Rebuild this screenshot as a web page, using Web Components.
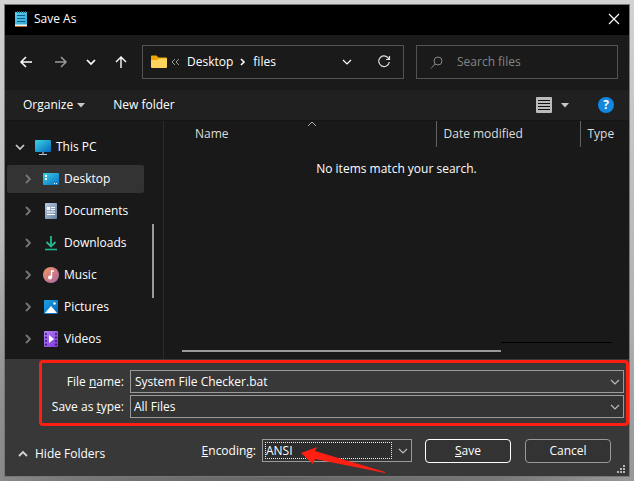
<!DOCTYPE html>
<html lang="en">
<head>
<meta charset="utf-8">
<title>Save As</title>
<style>
html,body{height:100%}
body{margin:0;font:12px/16px "Open Sans","Noto Sans",sans-serif;color:#fff;
background:radial-gradient(ellipse 60% 75% at 45% 100%,#666 0,#777 55%,transparent 100%),linear-gradient(#d2d2d2,#a0a0a0)}
</style>
</head>
<body>
<save-dialog></save-dialog>
<script>
const base = `*{box-sizing:border-box}button,input,select{font:inherit;color:inherit;margin:0}
button{background:none;border:0;padding:0;display:flex;align-items:center}svg{display:block;flex:none}`;
function define(name, css, html) {
  customElements.define(name, class extends HTMLElement {
    constructor() {
      super();
      this.attachShadow({mode: 'open'}).innerHTML = `<style>${base}${css}</style>${typeof html === 'function' ? html(this) : html}`;
    }
  });
}
const svg = (w, h, body) => `<svg width="${w}" height="${h}" viewBox="0 0 ${w} ${h}" fill="none" aria-hidden="true">${body}</svg>`;
const icons = {
  notepad: svg(12, 16, '<defs><linearGradient id="a" x2="1" y2="1"><stop stop-color="#5fd0ee"/><stop offset="1" stop-color="#2ba4d4"/></linearGradient></defs><path d="M0 1h12v14H0z" fill="url(#a)"/><path d="M0 13.5h12V15H0z" fill="#e8f2f5"/><path d="M0 15h12v1H0z" fill="#b2622a"/><path d="M2 4.5h8M2 7.5h8M2 10.500h8" stroke="#0c5f8a"/><path d="M2.500 0v2M4.500 0v2M6.500 0v2M8.500 0v2M10.500 0v2" stroke="#17668a"/>'),
  close: svg(12, 12, '<path d="M1 1l10 10M11 1L1 11" stroke="#fff" stroke-width="1.200"/>'),
  back: svg(14, 14, '<path d="M13 7H2M7 2L2 7l5 5" stroke="#fff" stroke-width="1.500"/>'),
  forward: svg(14, 14, '<path d="M1 7h11M7 2l5 5-5 5" stroke="#999" stroke-width="1.500"/>'),
  up: svg(14, 14, '<path d="M7 13V2M2 7l5-5 5 5" stroke="#fff" stroke-width="1.400"/>'),
  down: svg(10, 8, '<path d="M1 2l4 4 4-4" stroke="currentColor" stroke-width="1.700"/>'),
  thinDown: svg(10, 8, '<path d="M1 2l4 4 4-4" stroke="currentColor" stroke-width="1.200"/>'),
  right: svg(6, 10, '<path d="M1 1l4 4-4 4" stroke="currentColor" stroke-width="1.800"/>'),
  crumb: svg(6, 10, '<path d="M1 2l3 3-3 3" stroke="#fff" stroke-width="1.600"/>'),
  hide: svg(10, 8, '<path d="M1 6l4-4 4 4" stroke="#d5d5d5" stroke-width="1.800"/>'),
  folder: svg(16, 14, '<path d="M0 1.500Q0 .500 1 .500h4.500l2 2H15q1 0 1 1V7H0z" fill="#f0a500"/><path d="M0 5h6l2-1.500h7q1 0 1 1V12q0 1-1 1H1q-1 0-1-1z" fill="#ffd45a"/>'),
  chev2: svg(9, 8, '<path d="M4 1L1 4l3 3M8 1L5 4l3 3" stroke="#999"/>'),
  refresh: svg(14, 14, '<path d="M12 4.300A5.300 5.300 0 1 0 12.300 7M12.500 1v3.500H9" stroke="#ddd" stroke-width="1.200"/>'),
  search: svg(13, 13, '<circle cx="8" cy="5" r="4" stroke="#858585"/><path d="M5 8l-4 4.500" stroke="#858585"/>'),
  tri: svg(8, 5, '<path d="M0 0h8L4 4.500z" fill="#c8c8c8"/>'),
  list: svg(16, 16, '<rect width="16" height="16" rx="1" fill="#bbb"/><path d="M2 3.500h12M2 6.500h12M2 9.500h12M2 12.500h12" stroke="#111"/>'),
  pc: svg(16, 16, '<defs><linearGradient id="a" x2="1" y2="1"><stop stop-color="#39d5e5"/><stop offset="1" stop-color="#0867bd"/></linearGradient></defs><rect y="1" width="16" height="12" rx="1" fill="url(#a)"/><path d="M7 13h2v2H7z" fill="#6e7e90"/><path d="M4 15.500h8" stroke="#b7c6d6"/>'),
  desktop: svg(16, 16, '<defs><linearGradient id="a" x2="1" y2="1"><stop stop-color="#36d0e2"/><stop offset="1" stop-color="#0b70c4"/></linearGradient></defs><rect y="2" width="16" height="12" rx="1" fill="url(#a)"/><path d="M2 4h2v2H2zM2 7h2v2H2z" fill="#fff"/><path d="M11 12.500h1M13 12.500h1" stroke="#fff"/>'),
  docs: svg(16, 16, '<defs><linearGradient id="a" x2="1" y2="1"><stop stop-color="#b7cbe0"/><stop offset="1" stop-color="#657f9e"/></linearGradient></defs><rect x="2" width="12" height="16" rx="1" fill="url(#a)"/><path d="M4 4h3v3H4zM8 4h4v1H8zM8 6h4v1H8zM4 8.500h8v1H4zM4 11h8v1H4z" fill="#fff"/>'),
  downloads: svg(16, 16, '<path d="M8 1v10M3.500 7L8 11.500 12.500 7" stroke="#27b98f" stroke-width="1.800"/><path d="M2 14.500h12" stroke="#20b38f" stroke-width="1.600"/>'),
  music: svg(16, 16, '<defs><linearGradient id="a" x2="1" y2="1"><stop stop-color="#f39a62"/><stop offset=".6" stop-color="#c8788a"/><stop offset="1" stop-color="#a26ba8"/></linearGradient></defs><circle cx="8" cy="8" r="8" fill="url(#a)"/><circle cx="7" cy="10.500" r="2" fill="#fff"/><path d="M8.500 10.500V4h2.500" stroke="#fff" stroke-width="1.400"/>'),
  pictures: svg(16, 16, '<defs><linearGradient id="a" x2="1" y2="1"><stop stop-color="#1ba3e6"/><stop offset="1" stop-color="#0b62b8"/></linearGradient></defs><rect x="1" y="1" width="14" height="14" rx="1" fill="url(#a)"/><path d="M2 14l6-7 6 7z" fill="#fff"/><circle cx="11.500" cy="4.500" r="1.200" fill="#fff"/>'),
  videos: svg(16, 16, '<defs><linearGradient id="a" x2="1" y2="1"><stop stop-color="#b382f5"/><stop offset="1" stop-color="#7b35d8"/></linearGradient></defs><rect x="1" width="14" height="16" rx="1" fill="url(#a)"/><path d="M2 3h2M2 6.500h2M2 10h2M2 13.500h2M12 3h2M12 6.500h2M12 10h2M12 13.500h2" stroke="#3b1775" stroke-width="1.500"/><path d="M6 4l5 4-5 4z" fill="#fff"/>'),
  help: svg(16, 16, '<circle cx="8" cy="8" r="8" fill="#1287dd"/>')
};

define('title-bar', `:host{display:flex;align-items:center;height:30px;flex:none;padding:0 9px 2px 10px;background:#000}
h1{font:inherit;margin:0 auto 0 7px}`,
  `${icons.notepad}<h1><slot></slot></h1><button aria-label="Close">${icons.close}</button>`);

define('nav-bar', `:host{display:flex;align-items:center;height:55px;flex:none;padding:0 11px 1px 14px;background:#1a1a1a;gap:12px}
nav{display:flex;align-items:center;width:111px;flex:none;gap:21px}nav button:nth-child(3){margin:0 -3px}
.address,.search{display:flex;align-items:center;height:34px;border:1px solid #535353}
.address{flex:1 1 261px;min-width:0;padding:0 12px 0 8px;gap:4px}.address a{color:inherit;text-decoration:none;margin:0 3px}
.address .more{margin-left:auto;margin-right:21px}
.search{flex:0 1 202px;min-width:0;padding:0 13px;gap:14px}input{flex:1;min-width:0;width:0;background:none;border:0;padding:0;outline:0}input::placeholder{color:#858585;opacity:1}`,
  `<nav aria-label="History"><button aria-label="Back">${icons.back}</button><button aria-label="Forward">${icons.forward}</button><button aria-label="Recent">${icons.down}</button><button aria-label="Up">${icons.up}</button></nav>
<div class="address">${icons.folder}${icons.chev2}<a href="#desktop">Desktop</a>${icons.crumb}<a href="#files">files</a><button class="more" aria-label="Previous locations">${icons.thinDown}</button><button aria-label="Refresh">${icons.refresh}</button></div>
<div class="search">${icons.search}<input type="search" aria-label="Search files" placeholder="Search files"></div>`);

define('tool-bar', `:host{display:flex;align-items:center;height:30px;flex:none;padding:0 15px 0 18px;background:#202020}
button{gap:4px}.new{margin:0 auto 0 28px}.view{gap:9px;margin-right:29px}
.help{position:relative}.help span{position:absolute;inset:0;text-align:center;font-weight:700}`,
  `<button>Organize ${icons.tri}</button><button class="new">New folder</button><button class="view" aria-label="Change your view">${icons.list}${icons.tri}</button><button class="help" aria-label="Help">${icons.help}<span>?</span></button>`);

define('tree-item', `:host{display:flex;align-items:center;height:28px;margin-right:19px;padding-left:18px;gap:12px;color:#fff}
:host([open]){padding-left:8px;gap:10px}:host([selected]){background:#333;border-radius:2px}
.t{color:#777}:host([open]) .t{color:#ccc}.n{display:flex;align-items:center;gap:5px}`,
  el => `<button class="t" aria-label="Expand">${el.hasAttribute('open') ? icons.down : icons.right}</button><span class="n">${icons[el.getAttribute('icon')]}<slot></slot></span>`);

define('folder-tree', `:host{display:grid;align-content:start;gap:4px;width:159px;flex:none;padding:12px 0 0 2px;border-right:1px solid #2b2b2b;background:#191919;position:relative}
i{position:absolute;right:9px;top:103px;width:2px;height:74px;background:#9a9a9a}`, `<slot></slot><i></i>`);

define('file-list', `:host{display:flex;flex-direction:column;flex:1;min-width:0;background:#191919}
table{width:100%;border-collapse:collapse;table-layout:fixed}
th{position:relative;font-weight:400;text-align:left;color:#dedede;height:26px;padding:0 0 0 7px;border-left:1px solid #636363}
th:first-child{border:0;padding-left:31px}th svg{position:absolute;left:143px;top:0}
td{text-align:center;padding:14px 0 0}
.bars{margin-top:auto;padding:0 17px 7px 18px}.edge{height:1px;background:#000;width:111px;margin-left:auto}.thumb{width:319px;max-width:75%;height:2px;background:#999;margin-top:7px}`,
  `<table><colgroup><col><col style="width:144px"><col style="width:49px"></colgroup><thead><tr><th>${svg(10, 6, '<path d="M1 5l4-4 4 4" stroke="#aaa"/>')}Name</th><th>Date modified</th><th>Type</th></tr></thead><tbody><tr><td colspan="3">No items match your search.</td></tr></tbody></table><div class="bars"><div class="edge"></div><div class="thumb"></div></div>`);

define('name-fields', `:host{display:grid;grid-template-columns:82px 1fr;gap:2px 6px;align-items:center;border:3px solid #ff1e12;border-radius:4px;margin:1px 0 0 34px;padding:7px 2px 5px 0}
label{text-align:right}.field{position:relative;display:flex;height:23px;border:1px solid #9b9b9b;background:#333}
.first{background:#383838}input,select{flex:1;min-width:0;width:0;border:0;outline:0;background:none;appearance:none;padding:0 28px 0 4px}
select{padding-left:3px}
.field>svg,.field>button{position:absolute;right:3px;top:7px;color:#bbb;pointer-events:none}`,
  `<label for="n">File <u>n</u>ame:</label><div class="field first"><input id="n" value="System File Checker.bat"><button aria-label="Recent names">${icons.thinDown}</button></div>
<label for="t">Save as <u>t</u>ype:</label><div class="field"><select id="t"><option>All Files</option></select>${icons.thinDown}</div>`);

define('action-bar', `:host{display:flex;align-items:center;flex:1;position:relative;padding:0 18px 1px 13px}
.hide{gap:7px;margin:6px auto 0 0}
label{margin-right:6px}.sel{position:relative;width:150px;height:23px;border:1px solid #9b9b9b;background:#333;padding:2px 19px 2px 2px;margin-right:13px;display:flex}
.sel>svg{position:absolute;right:3px;top:7px;color:#bbb}select{width:100%;height:17px;line-height:15px;border:1px dotted #eee;appearance:none;outline:0;background:#2d2d2d;padding:0}
.b{width:86px;height:24px;justify-content:center;background:#333;border:1px solid #999;border-radius:4px}.b.main{border-color:#fff;margin-right:14px}
.arrow{position:absolute;left:295px;top:19px;pointer-events:none}.grip{position:absolute;right:3px;bottom:2px}`,
  `<button class="hide">${icons.hide}Hide Folders</button><label for="e"><u>E</u>ncoding:</label><div class="sel"><select id="e"><option>ANSI</option></select>${icons.thinDown}</div><button class="b main"><span><u>S</u>ave</span></button><button class="b">Cancel</button>
<div class="arrow">${svg(86, 30, '<path d="M1 8L17 2l-2 4L85 27v1L15 14l-2 5z" fill="#ff1e12"/>')}</div>
<div class="grip">${svg(9, 9, '<path d="M6 0h2v2H6zM3 3h2v2H3zM6 3h2v2H6zM0 6h2v2H0zM3 6h2v2H3zM6 6h2v2H6z" fill="#b5b5b5"/>')}</div>`);

define('save-dialog', `:host{display:block;box-sizing:border-box;height:100%;padding:4px}
.win{height:100%;display:flex;flex-direction:column;border:1px solid #777}
.body{display:flex;flex:1;min-height:0;border-top:1px solid #151515}
footer{display:flex;flex-direction:column;height:117px;flex:none;background:#383838}`,
  `<div class="win"><title-bar>Save As</title-bar><nav-bar></nav-bar><tool-bar></tool-bar>
<div class="body"><folder-tree><tree-item open icon="pc">This PC</tree-item><tree-item selected icon="desktop">Desktop</tree-item><tree-item icon="docs">Documents</tree-item><tree-item icon="downloads">Downloads</tree-item><tree-item icon="music">Music</tree-item><tree-item icon="pictures">Pictures</tree-item><tree-item icon="videos">Videos</tree-item></folder-tree><file-list></file-list></div>
<footer><name-fields></name-fields><action-bar></action-bar></footer></div>`);
</script>
</body>
</html>
